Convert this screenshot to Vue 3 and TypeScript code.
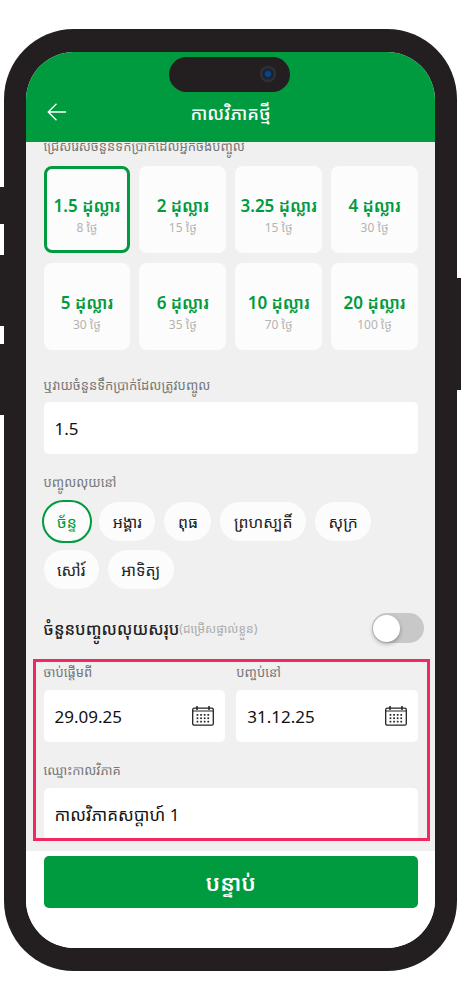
<script setup lang="ts">
interface Amount { value: string; days: string }
const amounts: Amount[] = [
  { value: '1.5 ដុល្លារ', days: '8 ថ្ងៃ' },
  { value: '2 ដុល្លារ', days: '15 ថ្ងៃ' },
  { value: '3.25 ដុល្លារ', days: '15 ថ្ងៃ' },
  { value: '4 ដុល្លារ', days: '30 ថ្ងៃ' },
  { value: '5 ដុល្លារ', days: '30 ថ្ងៃ' },
  { value: '6 ដុល្លារ', days: '35 ថ្ងៃ' },
  { value: '10 ដុល្លារ', days: '70 ថ្ងៃ' },
  { value: '20 ដុល្លារ', days: '100 ថ្ងៃ' }
]
const weekdays = ['ច័ន្ទ', 'អង្គារ', 'ពុធ', 'ព្រហស្បតិ៍', 'សុក្រ', 'សៅរ៍', 'អាទិត្យ']
const dates = [
  { label: 'ចាប់ផ្តើមពី', value: '29.09.25' },
  { label: 'បញ្ចប់នៅ', value: '31.12.25' }
]
const calDots: { x: number; y: number }[] = []
for (const y of [8, 11.4, 14.8]) {
  for (const x of [4.6, 8.2, 11.8, 15.4]) {
    calDots.push({ x, y })
  }
}
</script>

<template>
  <div class="page">
    <div class="phone">
      <span class="btn btn-l1"></span>
      <span class="btn btn-l2"></span>
      <span class="btn btn-l3"></span>
      <span class="btn btn-r"></span>
      <div class="screen">
        <div class="island"><span class="camera"></span></div>
        <header class="appbar">
          <svg class="back" viewBox="0 0 19 18" width="19" height="18" fill="none" stroke="#fff" stroke-width="1.3">
            <path d="M19 9H1.2M9.5 .7 1.2 9l8.3 8.3" />
          </svg>
          <h1 class="title">កាលវិភាគថ្មី</h1>
        </header>
        <main class="content">
          <p class="label first">ជ្រើសរើសចំនួនទឹកប្រាក់ដែលអ្នកចង់បញ្ចូល</p>
          <div class="amounts">
            <div v-for="(a, i) in amounts" :key="a.value" class="amount" :class="{ active: i === 0 }">
              <div class="amount-value">{{ a.value }}</div>
              <div class="amount-days">{{ a.days }}</div>
            </div>
          </div>
          <p class="label or">ឬវាយចំនួនទឹកប្រាក់ដែលត្រូវបញ្ចូល</p>
          <div class="field">1.5</div>
          <p class="label pay">បញ្ចូលលុយនៅ</p>
          <div class="days">
            <span v-for="(d, i) in weekdays" :key="d" class="day" :class="{ active: i === 0 }">{{ d }}</span>
          </div>
          <div class="total">
            <span class="total-main">ចំនួនបញ្ចូលលុយសរុប</span><span class="total-sub">(ជម្រើសផ្ទាល់ខ្លួន)</span>
            <span class="switch"><span class="knob"></span></span>
          </div>
          <div class="date-row">
            <div v-for="d in dates" :key="d.label" class="date-col">
              <p class="label">{{ d.label }}</p>
              <div class="field date-field">
                <span>{{ d.value }}</span>
                <svg class="cal" viewBox="0 0 22 20" width="22" height="20" fill="none">
                  <rect x="0.7" y="2.2" width="20.6" height="17" rx="1.5" stroke="#222" stroke-width="1.3" />
                  <path d="M5 0v4M17 0v4" stroke="#222" stroke-width="1.5" />
                  <path d="M1 5h20" stroke="#222" stroke-width="1" />
                  <rect v-for="(dot, k) in calDots" :key="k" :x="dot.x" :y="dot.y" width="1.7" height="1.7" fill="#222" />
                </svg>
              </div>
            </div>
          </div>
          <p class="label name-label">ឈ្មោះកាលវិភាគ</p>
          <div class="field name-field">កាលវិភាគសប្តាហ៍ 1</div>
          <div class="highlight"></div>
        </main>
        <footer class="footer">
          <div class="next">បន្ទាប់</div>
        </footer>
      </div>
    </div>
  </div>
</template>

<style>
html, body { margin: 0; background: #fff; }
</style>

<style scoped>
.page {
  width: 461px;
  height: 1000px;
  background: #fff;
  padding: 29px 0 0 4px;
  box-sizing: border-box;
  overflow: hidden;
  font-family: "Noto Sans", "Noto Sans Khmer", "Open Sans", sans-serif;
}
.phone {
  position: relative;
  width: 453px;
  height: 942px;
  box-sizing: border-box;
  padding: 23px 22px;
  background: #231f20;
  border-radius: 70px;
}
.btn { position: absolute; background: #231f20; }
.btn-l1 { left: -4px; width: 6px; top: 158px; height: 37px; }
.btn-l2 { left: -4px; width: 6px; top: 226px; height: 71px; }
.btn-l3 { left: -4px; width: 6px; top: 315px; height: 71px; }
.btn-r { right: -4px; width: 6px; top: 249px; height: 112px; }
.screen {
  position: relative;
  height: 896px;
  width: 409px;
  background: #fff;
  border-radius: 48px;
  overflow: hidden;
  display: flex;
  flex-direction: column;
}
.island {
  position: absolute;
  z-index: 2;
  left: 143px;
  top: 5px;
  width: 121px;
  height: 35px;
  border-radius: 18px;
  background: #231f20;
}
.camera {
  position: absolute;
  right: 14px;
  top: 9px;
  width: 16px;
  height: 16px;
  border-radius: 50%;
  background: radial-gradient(circle at 50% 50%, #0e4486 0 2.5px, #14202e 4px, #34373b 8px);
}
.appbar {
  height: 90px;
  flex: none;
  background: #009a3f;
  display: flex;
  align-items: flex-end;
  justify-content: center;
  position: relative;
}
.back { position: absolute; left: 21px; top: 51px; }
.title {
  margin: 0 0 13px;
  color: #fff;
  font-size: 18px;
  line-height: 32px;
  font-weight: 500;
}
.content {
  position: relative;
  flex: 1;
  min-height: 0;
  background: #f0f0f0;
  padding: 0 17px 0 17.5px;
  overflow: hidden;
}
.label {
  margin: 0;
  color: #777;
  font-size: 13px;
  line-height: 20px;
}
.label.first { margin-top: -6px; }
.amounts {
  display: grid;
  grid-template-columns: repeat(4, 1fr);
  grid-auto-rows: 87px;
  column-gap: 9px;
  row-gap: 10px;
  margin-top: 10px;
}
.amount {
  background: #fcfcfc;
  border-radius: 8px;
  box-sizing: border-box;
  display: flex;
  flex-direction: column;
  align-items: center;
  justify-content: center;
  padding-top: 10px;
}
.amount.active { border: 3px solid #009a3f; }
.amount-value {
  color: #009a3f;
  font-size: 17px;
  font-weight: 600;
  line-height: 26px;
  white-space: nowrap;
}
.amount-days { color: #b3b3b3; font-size: 12px; line-height: 18px; }
.label.or { margin-top: 25px; }
.field {
  background: #fff;
  border-radius: 5px;
  height: 52px;
  box-sizing: border-box;
  padding: 0 11px;
  display: flex;
  align-items: center;
  color: #111;
  font-size: 17px;
  margin-top: 7px;
}
.label.pay { margin-top: 18px; }
.days {
  display: flex;
  flex-wrap: wrap;
  gap: 9px;
  margin-top: 10px;
}
.day {
  height: 39px;
  padding: 0 13.5px;
  box-sizing: border-box;
  display: flex;
  align-items: center;
  background: #fcfcfc;
  border-radius: 20px;
  font-size: 15.8px;
  color: #222;
}
.day.active {
  color: #009a3f;
  outline: 2px solid #009a3f;
}
.total {
  display: flex;
  align-items: center;
  height: 30px;
  margin-top: 24px;
  position: relative;
}
.total-main { font-size: 16.4px; font-weight: 500; color: #222; }
.total-sub { font-size: 12px; color: #aaa; }
.switch {
  position: absolute;
  right: -6px;
  top: 0;
  width: 52px;
  height: 30px;
  border-radius: 15px;
  background: #c8c8c8;
}
.knob {
  position: absolute;
  left: 1px;
  top: 1.5px;
  width: 27px;
  height: 27px;
  border-radius: 50%;
  background: #fff;
  box-shadow: 0 2px 4px rgba(0, 0, 0, .3);
}
.date-row { display: flex; gap: 11px; margin-top: 19px; }
.date-col { flex: 1; min-width: 0; }
.date-field { justify-content: space-between; margin-top: 8px; }
.cal { flex: none; }
.label.name-label { margin-top: 18px; }
.name-field { margin-top: 8px; }
.highlight {
  position: absolute;
  left: 7px;
  width: 397px;
  top: 517px;
  height: 182px;
  border: 3px solid #f02a60;
  box-sizing: border-box;
  pointer-events: none;
}
.footer {
  height: 97px;
  flex: none;
  background: #fff;
  padding: 5px 17px 0 17.5px;
  box-sizing: border-box;
}
.next {
  height: 52px;
  border-radius: 5px;
  background: #009a3f;
  color: #fff;
  display: flex;
  align-items: center;
  justify-content: center;
  font-size: 22px;
  font-weight: 600;
}
</style>
